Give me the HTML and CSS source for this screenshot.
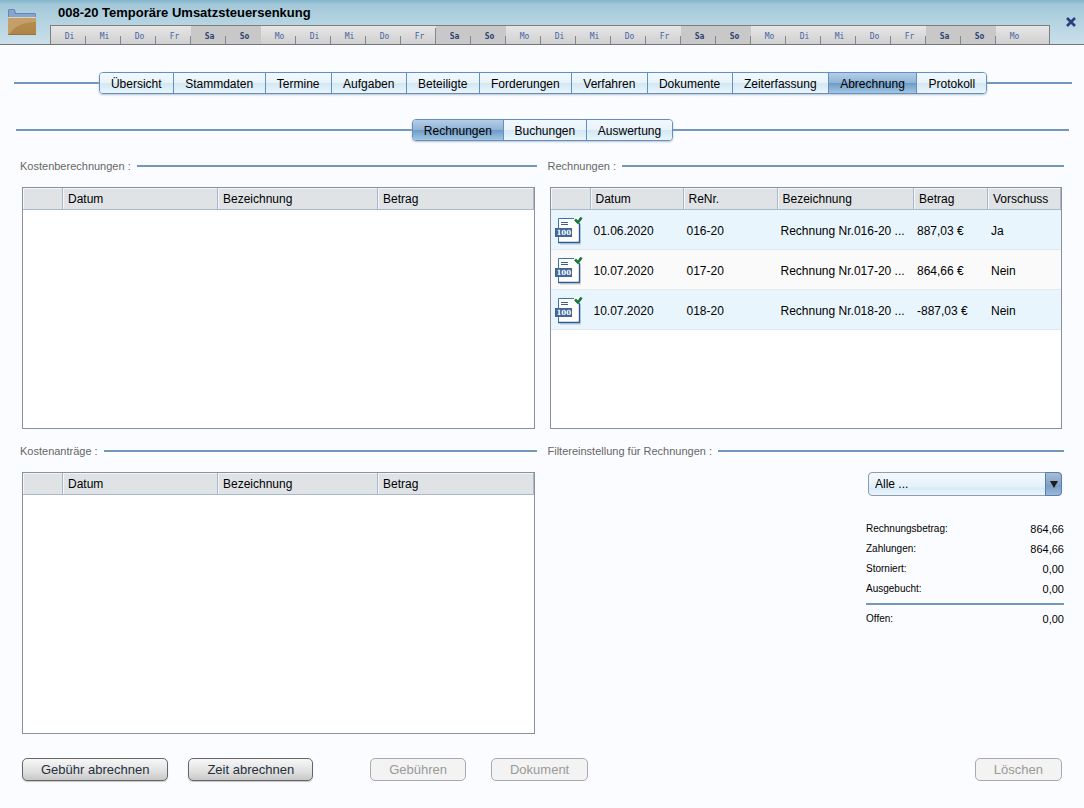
FILE: index.html
```html
<!DOCTYPE html>
<html lang="de">
<head>
<meta charset="utf-8">
<meta name="viewport" content="width=device-width, initial-scale=1">
<title>008-20 Temporäre Umsatzsteuersenkung</title>
<link rel="stylesheet" href="styles.css">
</head>
<body>
<svg class="sprite" aria-hidden="true">
  <defs>
    <linearGradient id="folder-front" x1="0" y1="0" x2="0" y2="1"><stop offset="0" stop-color="#b98f4f"/><stop offset="1" stop-color="#ad8347"/></linearGradient>
    <symbol id="invoice" viewBox="0 0 28 28">
      <path d="M5 3h21v25H5z" fill="#000" opacity=".1"/>
      <path d="M3.500 1.500h21v24h-21z" fill="#fff" stroke="#3f74ab"/>
      <path d="M3 25.500h22M24.500 7v19" stroke="#2c5a94" stroke-width="1.400" fill="none"/>
      <path d="M6 5.500h7M6 7.500h7" stroke="#3d618c"/>
      <path d="M19 0h7v6h-7z" fill="#fff"/>
      <path d="M20 2.500l3 3 3.500-5" stroke="#15793a" stroke-width="2.600" fill="none"/>
      <path d="M0 11h17v9H0z" fill="#3f6696"/>
      <text x="1.500" y="18" class="invoice-number">100</text>
    </symbol>
  </defs>
</svg>
<header class="titlebar">
  <svg class="folder" viewBox="0 0 28 26" aria-hidden="true">
    <path d="M0 8V1l1-1h5l1 1 1 3h19l1 1v4H0z" fill="#6487bb"/>
    <path d="M1 8V1h5l1 4h20v3z" fill="#86a5cf"/>
    <path d="M0 9h28v17H0z" fill="url(#folder-front)"/>
    <path d="M0 9h28v4C15 13 6 17 1 26H0z" fill="#c3a06a"/>
    <path d="M0 8.500h28" stroke="#e0d3bb"/>
    <path d="M0 25.500h28" stroke="#98733c"/>
  </svg>
  <div class="title-main">
    <h1>008-20 Temporäre Umsatzsteuersenkung</h1>
    <ol class="days">
      <li>Di</li><li>Mi</li><li>Do</li><li>Fr</li><li class="we">Sa</li><li class="we plain">So</li><li>Mo</li>
      <li>Di</li><li>Mi</li><li>Do</li><li class="month">Fr</li><li class="we">Sa</li><li class="we">So</li><li>Mo</li>
      <li>Di</li><li>Mi</li><li>Do</li><li>Fr</li><li class="we">Sa</li><li class="we">So</li><li>Mo</li>
      <li>Di</li><li>Mi</li><li>Do</li><li>Fr</li><li class="we">Sa</li><li class="we">So</li><li class="plain">Mo</li>
    </ol>
  </div>
  <button class="close" type="button" aria-label="Schließen">
    <svg viewBox="0 0 12 12"><path d="M2 2l8 8M10 2l-8 8" stroke="#2b3f80" stroke-width="2.600"/></svg>
  </button>
</header>

<nav class="tabs main-tabs">
  <div class="tab-group">
    <button type="button">Übersicht</button><button type="button">Stammdaten</button><button type="button">Termine</button><button type="button">Aufgaben</button><button type="button">Beteiligte</button><button type="button">Forderungen</button><button type="button">Verfahren</button><button type="button">Dokumente</button><button type="button">Zeiterfassung</button><button type="button" class="active">Abrechnung</button><button type="button">Protokoll</button>
  </div>
</nav>
<nav class="tabs sub-tabs">
  <div class="tab-group">
    <button type="button" class="active">Rechnungen</button><button type="button">Buchungen</button><button type="button">Auswertung</button>
  </div>
</nav>

<main class="panels">
  <section>
    <h2>Kostenberechnungen :</h2>
    <div class="list">
      <table>
        <colgroup><col class="c-icon"><col class="c-wide"><col class="c-name"><col></colgroup>
        <thead><tr><th></th><th>Datum</th><th>Bezeichnung</th><th>Betrag</th></tr></thead>
      </table>
    </div>
  </section>
  <section>
    <h2>Rechnungen :</h2>
    <div class="list">
      <table>
        <colgroup><col class="c-icon"><col class="c-date"><col class="c-number"><col><col class="c-sum"><col class="c-flag"></colgroup>
        <thead><tr><th></th><th>Datum</th><th>ReNr.</th><th>Bezeichnung</th><th>Betrag</th><th>Vorschuss</th></tr></thead>
        <tbody>
          <tr><td><svg class="invoice"><use href="#invoice"/></svg></td><td>01.06.2020</td><td>016-20</td><td>Rechnung Nr.016-20 ...</td><td>887,03 €</td><td>Ja</td></tr>
          <tr><td><svg class="invoice"><use href="#invoice"/></svg></td><td>10.07.2020</td><td>017-20</td><td>Rechnung Nr.017-20 ...</td><td>864,66 €</td><td>Nein</td></tr>
          <tr><td><svg class="invoice"><use href="#invoice"/></svg></td><td>10.07.2020</td><td>018-20</td><td>Rechnung Nr.018-20 ...</td><td>-887,03 €</td><td>Nein</td></tr>
        </tbody>
      </table>
    </div>
  </section>
  <section>
    <h2>Kostenanträge :</h2>
    <div class="list tall">
      <table>
        <colgroup><col class="c-icon"><col class="c-wide"><col class="c-name"><col></colgroup>
        <thead><tr><th></th><th>Datum</th><th>Bezeichnung</th><th>Betrag</th></tr></thead>
      </table>
    </div>
  </section>
  <section>
    <h2><label for="filter">Filtereinstellung für Rechnungen :</label></h2>
    <div class="filter">
      <select id="filter"><option>Alle ...</option></select>
      <span class="arrow"><svg viewBox="0 0 8 7"><path d="M0 0h8L4 7z" fill="#1c1c1c"/></svg></span>
    </div>
    <dl class="totals">
      <div><dt>Rechnungsbetrag:</dt><dd>864,66</dd></div>
      <div><dt>Zahlungen:</dt><dd>864,66</dd></div>
      <div><dt>Storniert:</dt><dd>0,00</dd></div>
      <div><dt>Ausgebucht:</dt><dd>0,00</dd></div>
      <div class="open"><dt>Offen:</dt><dd>0,00</dd></div>
    </dl>
  </section>
</main>

<footer class="actions">
  <div class="action-group">
    <button type="button">Gebühr abrechnen</button>
    <button type="button">Zeit abrechnen</button>
  </div>
  <div class="action-group documents">
    <button type="button" disabled>Gebühren</button>
    <button type="button" disabled>Dokument</button>
  </div>
  <button type="button" class="delete" disabled>Löschen</button>
</footer>
</body>
</html>
```

FILE: styles.css
```css
* { box-sizing: border-box; }
body {
  margin: 0;
  min-height: 100vh;
  background: #fbfcff;
  color: #000;
  font: 12px/16px "Liberation Sans", Arial, sans-serif;
}
button, select { font: inherit; color: inherit; margin: 0; }
.sprite { position: absolute; width: 0; height: 0; }
.invoice-number { font: bold 7px "DejaVu Serif", serif; fill: #fff; }

.titlebar {
  display: flex;
  height: 45px;
  border-bottom: 1px solid #757575;
  background: linear-gradient(#83b5cb, #a4c9da 5px, #cae0ea);
}
.folder { flex: none; width: 28px; height: 26px; margin: 9px 14px 0 8px; }
.title-main { flex: 1; min-width: 0; }
h1 { margin: 0; padding: 5px 8px 4px; font-size: 13px; line-height: 16px; }
.days {
  display: flex;
  height: 19px;
  margin: 0;
  padding: 0;
  list-style: none;
  overflow: hidden;
  border: 1px solid #7d7d7d;
  border-bottom: 0;
  background: linear-gradient(#e6e6e6, #d0d0d0);
}
.days li {
  flex: 0 0 35px;
  padding: 3px 0 0 2px;
  text-align: center;
  color: #46639f;
  font: 8px/16px "DejaVu Sans Mono", monospace;
  background: linear-gradient(#858590, #858590) right bottom / 1px 8px no-repeat;
}
.days .we { background-color: #c8c8c8; color: #2c406f; font-weight: bold; }
.days .plain { background-image: none; }
.days .month { background-size: 1px 16px; }
.close { flex: none; width: 34px; padding: 0 7px 0 15px; border: 0; background: none; }
.close svg { display: block; width: 12px; height: 12px; }

.tabs { display: flex; align-items: center; }
.tabs::before, .tabs::after { content: ""; flex: 1; height: 2px; background: #7398b9; }
.main-tabs { margin: 27px 12px 0 14px; }
.sub-tabs { margin: 25px 15px 0 16px; }
.tab-group {
  display: flex;
  border: 1px solid #6390c2;
  border-radius: 4px;
  overflow: hidden;
  box-shadow: 0 1px 2px #b8c2cc;
}
.main-tabs .tab-group { flex: 0 1 84%; }
.sub-tabs .tab-group { flex: 0 0 261px; }
.tab-group button {
  flex: 1 1 auto;
  height: 20px;
  padding: 1px 8px 0;
  border: 0;
  border-right: 1px solid #6390c2;
  background: linear-gradient(#f2f9fd, #e7f3fa 50%, #d3e7f3 51%, #e9f5fb);
}
.tab-group button:last-child { border-right: 0; }
.tab-group .active { background: linear-gradient(#b5cde5, #8fb4d7 50%, #6d9bc5 51%, #a3c6e2); }

.panels {
  display: grid;
  grid-template-columns: minmax(0, 1fr) minmax(0, 1fr);
  gap: 14px 11px;
  margin: 17px 20px 0;
}
h2 {
  display: flex;
  align-items: center;
  gap: 6px;
  margin: 0 0 13px;
  color: #666;
  font-size: 11px;
  line-height: 16px;
  font-weight: normal;
}
h2::after { content: ""; flex: 1; height: 2px; background: #7398b9; }
.list { min-height: 242px; margin: 0 2px; border: 1px solid #8b919c; background: #fff; }
.tall { min-height: 262px; }
table { width: 100%; table-layout: fixed; border-collapse: separate; border-spacing: 0; }
.c-icon { width: 40px; }
.c-wide { width: 155px; }
.c-name { width: 160px; }
.c-date { width: 93px; }
.c-number { width: 94px; }
.c-sum { width: 74px; }
.c-flag { width: 73px; }
th {
  height: 22px;
  padding: 0 0 0 5px;
  border-right: 1px solid #a9b8ca;
  border-bottom: 1px solid #a9b8ca;
  background: #dfe3e6;
  box-shadow: inset 1px 1px #f3f6f8;
  text-align: left;
  font-weight: normal;
}
td {
  height: 40px;
  padding: 2px 0 0 3px;
  border-bottom: 1px solid #e3e8ed;
  background: #e9f5fc;
  white-space: nowrap;
}
tr:nth-child(even) td { background: #fafafa; }
.invoice { display: block; width: 28px; height: 28px; margin-left: 1px; }

.filter { position: relative; width: 194px; margin: 0 2px 0 auto; }
.filter select {
  display: block;
  width: 100%;
  height: 24px;
  padding: 0 22px 0 6px;
  appearance: none;
  border: 1px solid #8f9bb0;
  border-radius: 4px;
  background: linear-gradient(#f4fafd, #e4f1f9 60%, #d8eaf5 70%, #eaf6fc);
}
.arrow {
  position: absolute;
  inset: 0 0 0 auto;
  display: grid;
  place-items: center;
  width: 17px;
  border: 1px solid #5680b4;
  border-radius: 0 4px 4px 0;
  background: linear-gradient(#a9bdd6, #7d9dc4 60%, #9bbad8);
  pointer-events: none;
}
.arrow svg { width: 8px; height: 7px; }
.totals { width: 198px; margin: 23px 0 0 auto; font-size: 10px; line-height: 20px; }
.totals div { display: flex; justify-content: space-between; }
.totals dd { margin: 0; font-size: 11px; }
.totals .open { margin-top: 4px; padding-top: 4px; border-top: 2px solid #7398b9; }

.actions { display: flex; margin: 24px 22px; font-size: 13px; }
.action-group { display: flex; gap: 20px; }
.documents { gap: 25px; margin-left: 57px; }
.actions button {
  height: 23px;
  padding: 0 18px;
  border: 1px solid #666;
  border-radius: 5px;
  background: linear-gradient(#f7f7f7, #e0e0e0 60%, #c8c8c8);
  box-shadow: 0 1px 1px #c5c5c5;
  color: #26303c;
}
.actions button:disabled { border-color: #aaa; background: #f3f3f3; box-shadow: none; color: #999; }
.actions .delete { margin-left: auto; }
```
